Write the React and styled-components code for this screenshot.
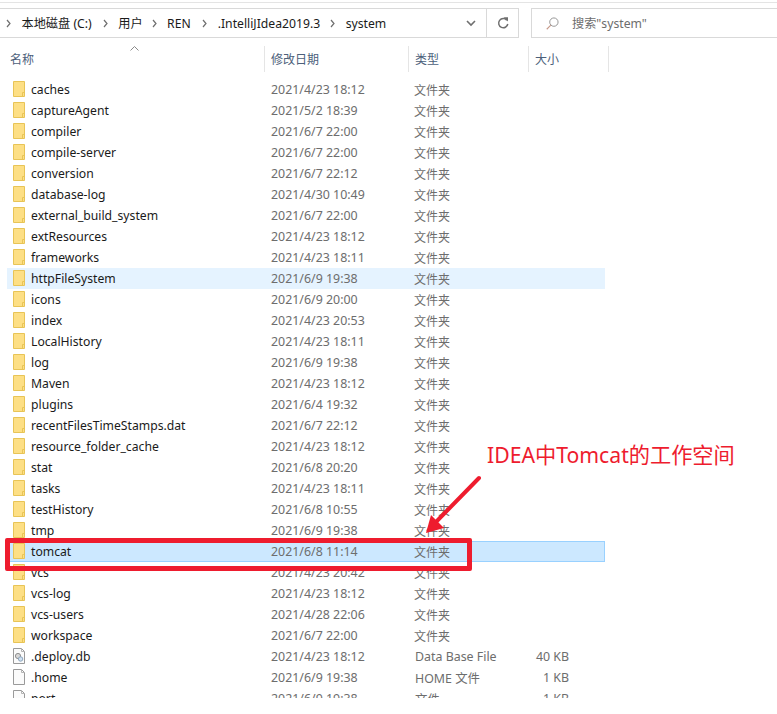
import { Fragment } from 'react'
import styled, { createGlobalStyle } from 'styled-components'

const GlobalStyle = createGlobalStyle`
  html, body {
    margin: 0;
    background: #fff;
  }
`

const UI_FONT = `"Noto Sans", "Noto Sans CJK SC", sans-serif`

const Window = styled.div`
  position: relative;
  width: 777px;
  height: 714px;
  overflow: hidden;
  background: #fff;
  font-family: ${UI_FONT};
  font-size: 12px;
  color: #1a1a1a;
`

const TopLine = styled.div`
  height: 1px;
  margin-top: 2px;
  background: #e4e4e4;
`

const Toolbar = styled.div`
  display: flex;
  height: 30px;
  margin-top: 5px;
`

const AddressBar = styled.div`
  display: flex;
  align-items: center;
  box-sizing: border-box;
  width: 519px;
  border: 1px solid #d9d9d9;
  border-left: none;
`

const Crumbs = styled.div`
  display: flex;
  flex: 1;
  align-items: center;
  padding-left: 6px;
`

const Crumb = styled.span`
  margin-right: ${p => p.$gap}px;
  margin-left: 10.5px;
  white-space: nowrap;
  font-size: 12.2px;
`

const AddressButton = styled.div`
  display: flex;
  align-items: center;
  justify-content: center;
  width: ${p => p.$width}px;
  height: 100%;
  border-left: ${p => (p.$divided ? '1px solid #d9d9d9' : 'none')};
`

const SearchBox = styled.div`
  display: flex;
  align-items: center;
  box-sizing: border-box;
  width: 246px;
  margin-left: 12px;
  padding-left: 14px;
  border: 1px solid #d9d9d9;
  border-right: none;
  color: #6d6d6d;
  font-size: 12.2px;
`

const SearchText = styled.span`
  margin-left: 13px;
`

const Header = styled.div`
  position: relative;
  display: grid;
  grid-template-columns: 265px 144px 120px 80px;
  height: 26px;
  margin-top: 8px;
`

const HeaderCell = styled.div`
  display: flex;
  align-items: center;
  box-sizing: border-box;
  padding-left: ${p => p.$pad}px;
  border-right: 1px solid #e5e5e5;
  color: #4c607a;
`

const SortCaret = styled.svg`
  position: absolute;
  top: 0;
  left: 130px;
`

const List = styled.div`
  height: 619px;
  margin-top: 7px;
  padding-left: 7px;
  overflow: hidden;
`

const Row = styled.div`
  display: grid;
  grid-template-columns: 24px 240px 144px 86px 68px;
  align-items: center;
  box-sizing: border-box;
  width: 598px;
  height: 21px;
  background: ${p => (p.$selected ? '#cce8ff' : p.$hot ? '#e5f3ff' : 'transparent')};
  outline: ${p => (p.$selected ? '1px solid #99d1ff' : 'none')};
  outline-offset: -1px;
`

const IconCell = styled.div`
  display: flex;
  align-items: center;
  height: 21px;
  padding-left: 5px;
`

const Name = styled.span`
  white-space: nowrap;
  font-size: 12.2px;
`

const Muted = styled.span`
  margin-left: ${p => (p.$folder ? -1 : 0)}px;
  color: #6d6d6d;
  white-space: nowrap;
  font-size: ${p => (p.$folder ? 12 : 12.4)}px;
`

const Size = styled(Muted)`
  text-align: right;
`

const HighlightBox = styled.div`
  position: absolute;
  top: 538px;
  left: 5px;
  box-sizing: border-box;
  width: 467px;
  height: 33px;
  border: 5px solid #ee1c2e;
  border-radius: 2px;
`

const Callout = styled.div`
  position: absolute;
  top: 440px;
  left: 487px;
  color: #ee1c2e;
  font-family: ${UI_FONT};
  font-size: 21.2px;
  line-height: 30px;
  white-space: nowrap;
`

const ArrowMark = styled.svg`
  position: absolute;
  top: 470px;
  left: 420px;
`

const FolderIcon = () => (
  <svg width="14" height="17" viewBox="0 0 14 17">
    <path d="M1.5 .5h11v15h-11z" fill="#fddf85" stroke="#e8c456" />
    <path d="M10.5 15.5v-4h2" fill="none" stroke="#e8c456" />
  </svg>
)

const BlankIcon = () => (
  <svg width="14" height="17" viewBox="0 0 14 17">
    <path d="M1.5 .5h8l3 3v12h-11z" fill="#fbfbfb" stroke="#9a9a9a" />
    <path d="M9.5 .5v3h3" fill="none" stroke="#b5b5b5" />
  </svg>
)

const DbIcon = () => (
  <svg width="14" height="17" viewBox="0 0 14 17">
    <path d="M1.5 .5h8l3 3v12h-11z" fill="#fbfbfb" stroke="#9a9a9a" />
    <path d="M9.5 .5v3h3" fill="none" stroke="#b5b5b5" />
    <circle cx="6" cy="8" r="2.6" fill="#d8d8d8" stroke="#8f8f8f" />
    <circle cx="8.6" cy="11" r="2.2" fill="#cfe1f2" stroke="#8fa6bd" />
  </svg>
)

const ICONS = { folder: FolderIcon, blank: BlankIcon, db: DbIcon }

const rows = [
  ['caches', '2021/4/23 18:12'],
  ['captureAgent', '2021/5/2 18:39'],
  ['compiler', '2021/6/7 22:00'],
  ['compile-server', '2021/6/7 22:00'],
  ['conversion', '2021/6/7 22:12'],
  ['database-log', '2021/4/30 10:49'],
  ['external_build_system', '2021/6/7 22:00'],
  ['extResources', '2021/4/23 18:12'],
  ['frameworks', '2021/4/23 18:11'],
  ['httpFileSystem', '2021/6/9 19:38'],
  ['icons', '2021/6/9 20:00'],
  ['index', '2021/4/23 20:53'],
  ['LocalHistory', '2021/4/23 18:11'],
  ['log', '2021/6/9 19:38'],
  ['Maven', '2021/4/23 18:12'],
  ['plugins', '2021/6/4 19:32'],
  ['recentFilesTimeStamps.dat', '2021/6/7 22:12'],
  ['resource_folder_cache', '2021/4/23 18:12'],
  ['stat', '2021/6/8 20:20'],
  ['tasks', '2021/4/23 18:11'],
  ['testHistory', '2021/6/8 10:55'],
  ['tmp', '2021/6/9 19:38'],
  ['tomcat', '2021/6/8 11:14'],
  ['vcs', '2021/4/23 20:42'],
  ['vcs-log', '2021/4/23 18:12'],
  ['vcs-users', '2021/4/28 22:06'],
  ['workspace', '2021/6/7 22:00'],
  ['.deploy.db', '2021/4/23 18:12', 'Data Base File', '40 KB', 'db'],
  ['.home', '2021/6/9 19:38', 'HOME 文件', '1 KB', 'blank'],
  ['port', '2021/6/9 19:38', '文件', '1 KB', 'blank'],
]

const crumbs = [
  ['本地磁盘 (C:)', 11],
  ['用户', 9],
  ['REN', 11.5],
  ['.IntelliJIdea2019.3', 10],
  ['system', 0],
]

function Chevron() {
  return (
    <svg width="5" height="9" viewBox="0 0 5 9">
      <path d="M1 1l3 3.5L1 8" fill="none" stroke="#6f6f6f" strokeWidth="1.2" />
    </svg>
  )
}

export default function App() {
  return (
    <Window>
      <GlobalStyle />
      <TopLine />
      <Toolbar>
        <AddressBar>
          <Crumbs>
            {crumbs.map(([label, gap]) => (
              <Fragment key={label}>
                <Chevron />
                <Crumb $gap={gap}>{label}</Crumb>
              </Fragment>
            ))}
          </Crumbs>
          <AddressButton $width={31}>
            <svg width="10" height="7" viewBox="0 0 10 7">
              <path d="M1 1l4 4 4-4" fill="none" stroke="#6f6f6f" strokeWidth="1.6" />
            </svg>
          </AddressButton>
          <AddressButton $width={31} $divided>
            <svg width="12" height="13" viewBox="0 0 12 13">
              <path d="M9.8 3.2A4.6 4.6 0 1 0 10.8 7" fill="none" stroke="#6f6f6f" strokeWidth="1.5" />
              <path d="M6.6 .2h4.4v4.4z" fill="#6f6f6f" />
            </svg>
          </AddressButton>
        </AddressBar>
        <SearchBox>
          <svg width="13" height="13" viewBox="0 0 14 14">
            <circle cx="8.5" cy="5.5" r="4.5" fill="none" stroke="#8f8f8f" />
            <path d="M5.2 8.8L.8 13.2" stroke="#c79a8a" strokeWidth="1.2" />
          </svg>
          <SearchText>搜索"system"</SearchText>
        </SearchBox>
      </Toolbar>
      <Header>
        <HeaderCell $pad={10}>名称</HeaderCell>
        <HeaderCell $pad={6}>修改日期</HeaderCell>
        <HeaderCell $pad={6}>类型</HeaderCell>
        <HeaderCell $pad={6}>大小</HeaderCell>
        <SortCaret width="9" height="5" viewBox="0 0 9 5">
          <path d="M.5 4.5l4-4 4 4" fill="none" stroke="#8a8a8a" />
        </SortCaret>
      </Header>
      <List>
        {rows.map(([name, date, type = '文件夹', size = '', icon = 'folder']) => {
          const Icon = ICONS[icon]
          return (
            <Row key={name} $hot={name === 'httpFileSystem'} $selected={name === 'tomcat'}>
              <IconCell><Icon /></IconCell>
              <Name>{name}</Name>
              <Muted>{date}</Muted>
              <Muted $folder={icon === 'folder'}>{type}</Muted>
              <Size>{size}</Size>
            </Row>
          )
        })}
      </List>
      <HighlightBox />
      <Callout>IDEA中Tomcat的工作空间</Callout>
      <ArrowMark width="66" height="70" viewBox="0 0 66 70">
        <path d="M59 8L14 54" stroke="#ee1c2e" strokeWidth="4" strokeLinecap="round" />
        <path d="M6 63l5-18 13 13z" fill="#ee1c2e" />
      </ArrowMark>
    </Window>
  )
}
